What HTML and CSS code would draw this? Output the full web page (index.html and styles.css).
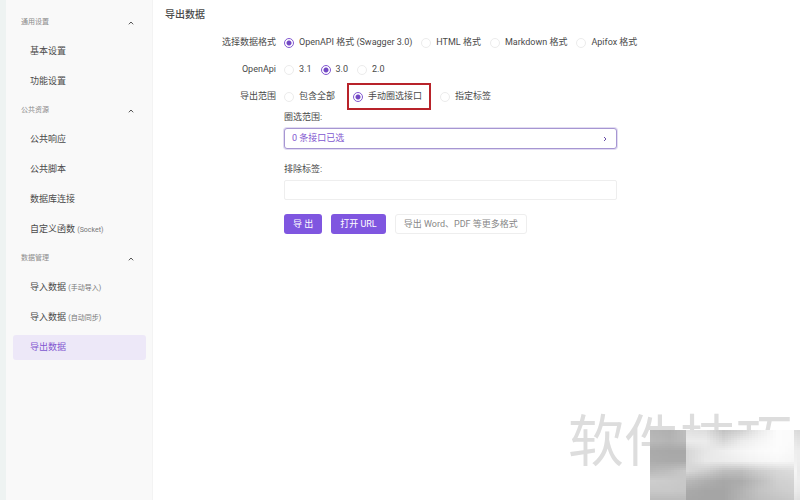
FILE: index.html
```html
<!DOCTYPE html>
<html lang="zh-CN">
<head>
    <meta charset="UTF-8">
    <meta name="viewport" content="width=device-width, initial-scale=1.0">
    <title>导出数据</title>
    <link rel="stylesheet" href="styles.css">
</head>
<body>

<nav class="sidebar">
    <button type="button" class="group">通用设置
        <svg class="arrow" viewBox="0 0 8 8"><path d="M1.8 5.3 4 3l2.2 2.3"/></svg>
    </button>
    <a class="item" href="#">基本设置</a>
    <a class="item" href="#">功能设置</a>

    <button type="button" class="group">公共资源
        <svg class="arrow" viewBox="0 0 8 8"><path d="M1.8 5.3 4 3l2.2 2.3"/></svg>
    </button>
    <a class="item" href="#">公共响应</a>
    <a class="item" href="#">公共脚本</a>
    <a class="item" href="#">数据库连接</a>
    <a class="item" href="#">自定义函数 <small>(Socket)</small></a>

    <button type="button" class="group">数据管理
        <svg class="arrow" viewBox="0 0 8 8"><path d="M1.8 5.3 4 3l2.2 2.3"/></svg>
    </button>
    <a class="item" href="#">导入数据 <small>(手动导入)</small></a>
    <a class="item" href="#">导入数据 <small>(自动同步)</small></a>
    <a class="item active" href="#">导出数据</a>
</nav>

<main class="content">
    <h1>导出数据</h1>
    <form class="export-form">
        <span class="row-label" id="formatLabel">选择数据格式</span>
        <div class="options" role="radiogroup" aria-labelledby="formatLabel">
            <label><input type="radio" name="format" checked>OpenAPI 格式 (Swagger 3.0)</label>
            <label><input type="radio" name="format">HTML 格式</label>
            <label><input type="radio" name="format">Markdown 格式</label>
            <label><input type="radio" name="format">Apifox 格式</label>
        </div>

        <span class="row-label" id="versionLabel">OpenApi</span>
        <div class="options" role="radiogroup" aria-labelledby="versionLabel">
            <label><input type="radio" name="version">3.1</label>
            <label><input type="radio" name="version" checked>3.0</label>
            <label><input type="radio" name="version">2.0</label>
        </div>

        <span class="row-label" id="scopeLabel">导出范围</span>
        <div class="options" role="radiogroup" aria-labelledby="scopeLabel">
            <label><input type="radio" name="scope">包含全部</label>
            <label class="marked"><input type="radio" name="scope" checked>手动圈选接口</label>
            <label><input type="radio" name="scope">指定标签</label>
        </div>

        <div class="fields">
            <label for="picker">圈选范围:</label>
            <button type="button" class="picker" id="picker">0 条接口已选
                <svg class="arrow" viewBox="0 0 8 8"><path d="M3 2 5 4 3 6"/></svg>
            </button>
            <label for="exclude">排除标签:</label>
            <input type="text" class="exclude" id="exclude">
            <div class="actions">
                <button type="button" class="primary">导 出</button>
                <button type="button" class="primary">打开 URL</button>
                <button type="button" class="plain">导出 Word、PDF 等更多格式</button>
            </div>
        </div>
    </form>
</main>

<div class="watermark">软件技巧</div>
<canvas class="mosaic" id="mosaic" width="150" height="70"></canvas>

<script>
    // grey levels per row, interpolated between the columns
    const columns = [0, 18, 35, 36, 54, 72, 90, 108, 126, 143, 144, 150];
    const levels = [
        [180, 176, 190, 225, 222, 195, 210, 235, 252, 250, 220, 215],
        [185, 180, 188, 235, 235, 215, 235, 245, 252, 250, 230, 225],
        [170, 168, 168, 215, 230, 238, 245, 250, 252, 248, 238, 235],
        [172, 170, 170, 215, 232, 235, 240, 245, 248, 245, 240, 235],
        [185, 190, 200, 215, 205, 190, 190, 205, 215, 220, 245, 225],
        [205, 203, 200, 185, 175, 168, 172, 190, 208, 212, 240, 235],
        [200, 200, 198, 170, 165, 165, 178, 195, 203, 208, 235, 230],
        [185, 185, 185, 165, 165, 165, 180, 190, 195, 200, 225, 220]
    ];
    const ctx = document.getElementById("mosaic").getContext("2d");

    function levelAt(row, x) {
        let i = 0;
        while (i < columns.length - 2 && x >= columns[i + 1]) i++;
        const t = (x - columns[i]) / (columns[i + 1] - columns[i]);
        return row[i] + (row[i + 1] - row[i]) * t;
    }

    for (let y = 0; y < 70; y += 2) {
        const r = Math.floor(y / 10);
        const t = (y % 10) / 10;
        for (let x = 0; x < 150; x += 3) {
            const top = levelAt(levels[r], x);
            const bottom = levelAt(levels[r + 1], x);
            const value = Math.round(top + (bottom - top) * t);
            ctx.fillStyle = `rgb(${value}, ${value}, ${value})`;
            ctx.fillRect(x, y, 3, 2);
        }
    }
</script>

</body>
</html>
```

FILE: styles.css
```css
* {
    box-sizing: border-box;
}

body {
    margin: 0;
    min-height: 100vh;
    display: flex;
    background-color: #fff;
    color: #4a4a4a;
    font-family: Roboto, "Noto Sans CJK SC", sans-serif;
    font-size: 9px;
    line-height: 15px;
}

button, input {
    font: inherit;
    color: inherit;
}

.sidebar {
    flex: 0 0 153px;
    display: flex;
    flex-direction: column;
    gap: 5px;
    padding: 11px 6px 10px 7px;
    border-left: 6px solid #eef3f2;
    border-right: 1px solid #f3f3f3;
    background-color: #f9f9f9;
}

.group {
    display: flex;
    align-items: center;
    justify-content: space-between;
    height: 23px;
    padding: 0 11px 0 8px;
    border: none;
    background: none;
    color: #8c8c8c;
    font-size: 7px;
}

.arrow {
    width: 8px;
    height: 8px;
    fill: none;
    stroke: #555;
    stroke-width: 1;
}

.item {
    height: 25px;
    padding: 5px 17px;
    border-radius: 3px;
    color: #4a4a4a;
    text-decoration: none;
    white-space: nowrap;
}

.item small {
    color: #777;
    font-size: 7px;
}

.item.active {
    background-color: #ede8f8;
    color: #8257d0;
}

.content {
    flex: 1;
    padding: 7px 12px;
}

h1 {
    margin: 0 0 6px;
    font-size: 10px;
    font-weight: 500;
    line-height: 16px;
}

.export-form {
    display: grid;
    grid-template-columns: 111px 1fr;
    column-gap: 8px;
}

.row-label {
    height: 27px;
    padding: 6px 0;
    text-align: right;
}

.options {
    display: flex;
    align-items: center;
    gap: 9px;
    height: 27px;
    white-space: nowrap;
}

.options label {
    display: flex;
    align-items: center;
    gap: 5px;
}

.options input {
    appearance: none;
    width: 10px;
    height: 10px;
    margin: 0;
    border: 1px solid #ececec;
    border-radius: 50%;
}

.options input:checked {
    border-color: #8257d0;
    background: radial-gradient(circle, #7248c4 2px, #fff 3px);
}

.options .marked {
    height: 27px;
    margin-left: 3px;
    padding: 0 7px 0 4px;
    border: 2px solid #b8232a;
}

.fields {
    grid-column: 2;
    display: flex;
    flex-direction: column;
    max-width: 333px;
}

.picker {
    display: flex;
    align-items: center;
    justify-content: space-between;
    height: 21px;
    margin: 3px 0 13px;
    padding: 0 7px;
    border: 1px solid #a696d2;
    border-radius: 3px;
    background-color: #fff;
    box-shadow: 0 0 0 1px #e2dcf2;
    color: #8257d0;
}

.picker .arrow {
    stroke: #6a4fa8;
}

.exclude {
    height: 20px;
    margin: 3px 0 14px;
    border: 1px solid #eee;
    border-radius: 2px;
}

.actions {
    display: flex;
    gap: 9px;
}

.actions button {
    height: 20px;
    padding: 0 9px;
    border: none;
    border-radius: 3px;
    white-space: nowrap;
}

.actions .primary {
    background-color: #7f56e0;
    color: #fff;
}

.actions .plain {
    padding: 0 8px;
    border: 1px solid #eee;
    background-color: #fff;
    color: #888;
}

.watermark {
    position: absolute;
    right: 8px;
    bottom: 18px;
    color: #ddd;
    font-size: 56px;
    line-height: 80px;
}

.mosaic {
    position: absolute;
    right: 0;
    bottom: 0;
    width: 150px;
    height: 70px;
}
```
